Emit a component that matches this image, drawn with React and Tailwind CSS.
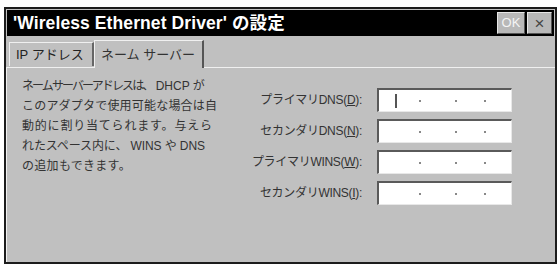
const FONT = { fontFamily: '"Liberation Sans", "Noto Sans CJK JP", sans-serif' }

const fields = [
  { label: 'プライマリDNS(', key: 'D', cursor: true },
  { label: 'セカンダリDNS(', key: 'N' },
  { label: 'プライマリWINS(', key: 'W' },
  { label: 'セカンダリWINS(', key: 'I' },
]

function IpBox({ cursor }) {
  return (
    <div className="relative h-[24px] w-[135px] border-t-2 border-l-2 border-t-[#5a5a5a] border-l-[#5a5a5a] border-b border-r border-b-[#e8e8e8] border-r-[#e8e8e8] bg-white">
      {cursor && <div className="absolute left-[16px] top-[4px] h-[14px] w-[2px] bg-[#555]" />}
      <span className="absolute left-[40px] top-[10px] h-[2px] w-[2px] bg-[#888]" />
      <span className="absolute left-[76px] top-[10px] h-[2px] w-[2px] bg-[#888]" />
      <span className="absolute left-[105px] top-[10px] h-[2px] w-[2px] bg-[#888]" />
    </div>
  )
}

export default function App() {
  return (
    <div className="h-[267px] w-[559px] bg-white pl-[4px] pt-[7px]" style={FONT}>
      <div className="flex h-[257px] w-[553px] flex-col border-2 border-[#1c1c1c] bg-[#c0c0c0]">
        <div className="mx-[1px] mt-[1px] flex h-[26px] items-center justify-between bg-black pl-[6px] pr-[2px]">
          <span className="text-[17.5px] font-bold tracking-[0.1px] text-white">'Wireless Ethernet Driver' の設定</span>
          <div className="flex gap-[2px]">
            <div className="flex h-[22px] w-[28px] items-center justify-center border border-t-[#e6e6e6] border-l-[#e6e6e6] border-b-[#555] border-r-[#555] bg-[#b8b8b8] text-[13px] text-[#f4f4f4]">
              OK
            </div>
            <div className="flex h-[22px] w-[25px] items-center justify-center border border-t-[#e6e6e6] border-l-[#e6e6e6] border-b-[#555] border-r-[#555] bg-[#b8b8b8] text-[17px] leading-none text-[#444]">
              ×
            </div>
          </div>
        </div>

        <div className="flex h-[32px] items-end border-b border-b-[#f0f0f0] pl-[3px]">
          <div className="mb-[1px] flex h-[24px] w-[85px] items-center border-t border-l border-t-[#f0f0f0] border-l-[#f0f0f0] border-r-2 border-r-[#666] pl-[6px] text-[13px] text-[#222]">
            IP アドレス
          </div>
          <div className="-mb-px flex h-[28px] w-[110px] items-center border-t border-l border-t-[#f0f0f0] border-l-[#f0f0f0] border-r-2 border-r-[#555] bg-[#c0c0c0] pl-[6px] text-[13px] text-[#333]">
            ネーム サーバー
          </div>
        </div>

        <div className="flex flex-1 border-l border-l-[#f0f0f0]">
          <div className="w-[243px] pl-[15px] pt-[8px] text-[12px] leading-[20px] text-[#333]">
            <div>
              <span className="tracking-[-1.9px]">ネームサーバーアドレスは、</span> DHCP が
            </div>
            <div className="tracking-[0.2px]">このアダプタで使用可能な場合は自</div>
            <div className="tracking-[0.8px]">動的に割り当てられます。与えら</div>
            <div className="tracking-[-0.1px]">れたスペース内に、 WINS や DNS</div>
            <div className="tracking-[0.3px]">の追加もできます。</div>
          </div>
          <div className="flex flex-col gap-[7px] pt-[20px]">
            {fields.map((f) => (
              <div key={f.key} className="flex items-center">
                <span className="w-[127px] pr-[15px] text-right text-[12px] tracking-[-0.3px] text-[#333]">
                  {f.label}
                  <span className="underline">{f.key}</span>):
                </span>
                <IpBox cursor={f.cursor} />
              </div>
            ))}
          </div>
        </div>
      </div>
    </div>
  )
}
